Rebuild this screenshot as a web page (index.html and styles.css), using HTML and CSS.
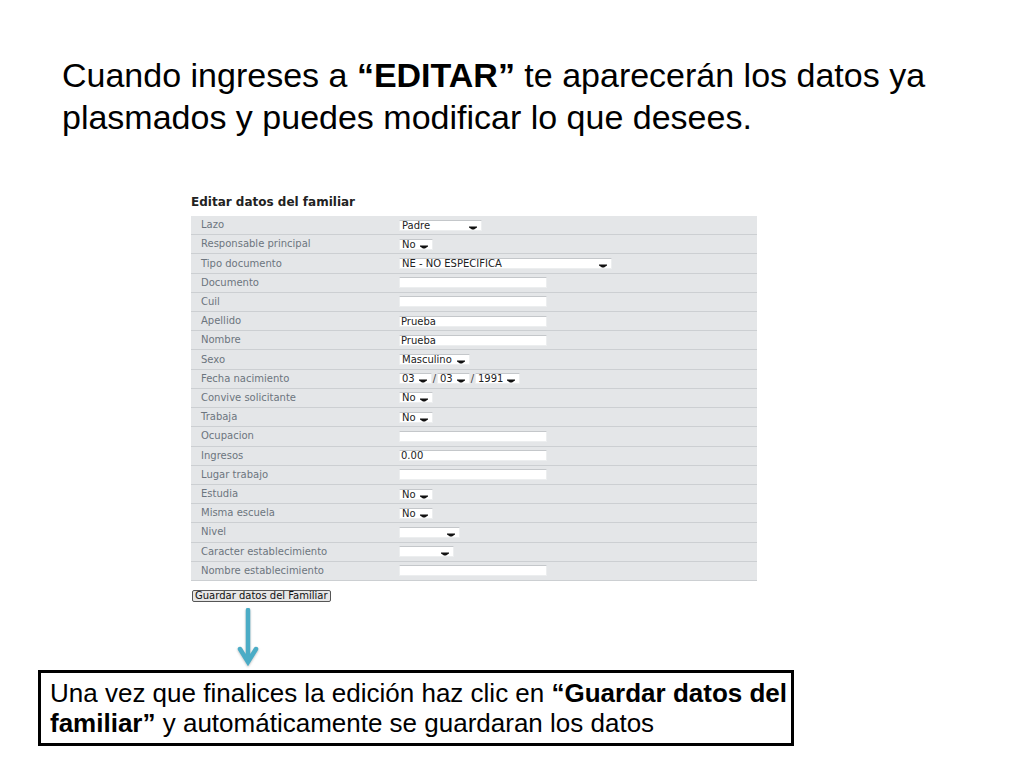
FILE: index.html
```html
<!DOCTYPE html>
<html lang="es">
<head>
<meta charset="utf-8">
<meta name="viewport" content="width=device-width, initial-scale=1">
<title>Editar datos del familiar</title>
<link rel="stylesheet" href="styles.css">
</head>
<body>
<main class="slide">
  <h1 class="lead">Cuando ingreses a <strong>“EDITAR”</strong> te aparecerán los datos ya plasmados y puedes modificar lo que desees.</h1>

  <form class="family">
    <h2 class="family-title">Editar datos del familiar</h2>
    <div class="rows">
      <div class="row"><label for="lazo">Lazo</label><div class="field"><select id="lazo" class="w-relation"><option>Padre</option></select></div></div>
      <div class="row"><label for="responsable">Responsable principal</label><div class="field"><select id="responsable" class="w-short"><option>No</option></select></div></div>
      <div class="row"><label for="tipo">Tipo documento</label><div class="field"><select id="tipo" class="w-type"><option>NE - NO ESPECIFICA</option></select></div></div>
      <div class="row"><label for="documento">Documento</label><div class="field"><input id="documento" type="text"></div></div>
      <div class="row"><label for="cuil">Cuil</label><div class="field"><input id="cuil" type="text"></div></div>
      <div class="row"><label for="apellido">Apellido</label><div class="field"><input id="apellido" type="text" value="Prueba"></div></div>
      <div class="row"><label for="nombre">Nombre</label><div class="field"><input id="nombre" type="text" value="Prueba"></div></div>
      <div class="row"><label for="sexo">Sexo</label><div class="field"><select id="sexo" class="w-sex"><option>Masculino</option></select></div></div>
      <div class="row"><label for="dia">Fecha nacimiento</label><div class="field"><select id="dia" class="w-day"><option>03</option></select><span class="slash">/</span><select class="w-day" aria-label="Mes"><option>03</option></select><span class="slash">/</span><select class="w-year" aria-label="Año"><option>1991</option></select></div></div>
      <div class="row"><label for="convive">Convive solicitante</label><div class="field"><select id="convive" class="w-short"><option>No</option></select></div></div>
      <div class="row"><label for="trabaja">Trabaja</label><div class="field"><select id="trabaja" class="w-short"><option>No</option></select></div></div>
      <div class="row"><label for="ocupacion">Ocupacion</label><div class="field"><input id="ocupacion" type="text"></div></div>
      <div class="row"><label for="ingresos">Ingresos</label><div class="field"><input id="ingresos" type="text" value="0.00"></div></div>
      <div class="row"><label for="lugar">Lugar trabajo</label><div class="field"><input id="lugar" type="text"></div></div>
      <div class="row"><label for="estudia">Estudia</label><div class="field"><select id="estudia" class="w-short"><option>No</option></select></div></div>
      <div class="row"><label for="escuela">Misma escuela</label><div class="field"><select id="escuela" class="w-short"><option>No</option></select></div></div>
      <div class="row"><label for="nivel">Nivel</label><div class="field"><select id="nivel" class="w-level"><option></option></select></div></div>
      <div class="row"><label for="caracter">Caracter establecimiento</label><div class="field"><select id="caracter" class="w-kind"><option></option></select></div></div>
      <div class="row"><label for="establecimiento">Nombre establecimiento</label><div class="field"><input id="establecimiento" type="text"></div></div>
    </div>
    <button class="save" type="button">Guardar datos del Familiar</button>
  </form>

  <svg class="arrow" width="24" height="60" viewBox="0 0 24 60" fill="none" aria-hidden="true">
    <path d="M12 2V53M4 41L12 54L20 41" stroke="#4bacc6" stroke-width="4.5" stroke-linecap="round"/>
    <path d="M7 46H17L12 55Z" fill="#4bacc6"/>
  </svg>

  <p class="note">Una vez que finalices la edición haz clic en <strong>“Guardar datos del familiar”</strong> y automáticamente se guardaran los datos</p>
</main>
</body>
</html>
```

FILE: styles.css
```css
* {
  box-sizing: border-box;
}

body {
  margin: 0;
  background: #fff;
  color: #000;
  font-family: "Liberation Sans", Arial, sans-serif;
}

.slide {
  display: flex;
  flex-direction: column;
  align-items: flex-start;
  padding: 54px 38px 20px;
}

.lead {
  max-width: 890px;
  margin: 0 0 57px;
  padding-left: 24px;
  font-size: 34px;
  font-weight: 400;
  line-height: 42px;
}

.family {
  width: 60%;
  max-width: 566px;
  margin-left: 153px;
  font-family: "DejaVu Sans", Verdana, sans-serif;
  font-size: 10px;
}

.family-title {
  margin: 0 0 7px;
  color: #222;
  font-size: 12px;
  line-height: 14px;
}

.rows {
  display: grid;
  grid-auto-rows: 1fr;
  min-height: 365px;
  background: #e4e6e8;
}

.row {
  display: grid;
  grid-template-columns: 208px 1fr;
  align-items: center;
  border-bottom: 1px solid #cccfd2;
}

.row label {
  padding-left: 10px;
  color: #6c757e;
  line-height: 12px;
}

.field {
  display: flex;
  align-items: center;
}

.field input,
.field select {
  height: 11px;
  margin: 0;
  border: 1px solid #eceeef;
  border-top-color: #c4c7ca;
  border-radius: 0;
  background-color: #fff;
  color: #222;
  font: inherit;
  line-height: 9px;
}

.field input {
  width: 148px;
  padding: 0 1px;
}

.field select {
  appearance: none;
  padding: 0 0 0 2px;
  background-image: url("data:image/svg+xml,%3Csvg xmlns='http://www.w3.org/2000/svg' width='8' height='4'%3E%3Cpath d='M0 0.5H8V1.5L5 3.5H3L0 1.5Z' fill='%23111'/%3E%3C/svg%3E");
  background-repeat: no-repeat;
  background-position: right 4px bottom 0;
}

.field .w-relation { width: 83px; }
.field .w-short { width: 34px; }
.field .w-type { width: 213px; }
.field .w-sex { width: 71px; }
.field .w-day { width: 33px; }
.field .w-year { width: 45px; }
.field .w-level { width: 61px; }
.field .w-kind { width: 55px; }

.slash {
  width: 5px;
  color: #444;
  line-height: 12px;
  text-align: center;
}

.save {
  display: block;
  margin: 9px 0 0 1px;
  height: 12px;
  padding: 0 2px;
  border: 1px solid #555;
  border-radius: 2px;
  background: #e6e6e6;
  color: #111;
  font: inherit;
  line-height: 10px;
}

.arrow {
  margin: 6px 0 2px 198px;
  filter: drop-shadow(0 1px 1px #00000040);
}

.note {
  width: 80%;
  max-width: 756px;
  margin: 0;
  padding: 5px 0 5px 9px;
  border: 3px solid #000;
  font-size: 26px;
  line-height: 30px;
}
```
